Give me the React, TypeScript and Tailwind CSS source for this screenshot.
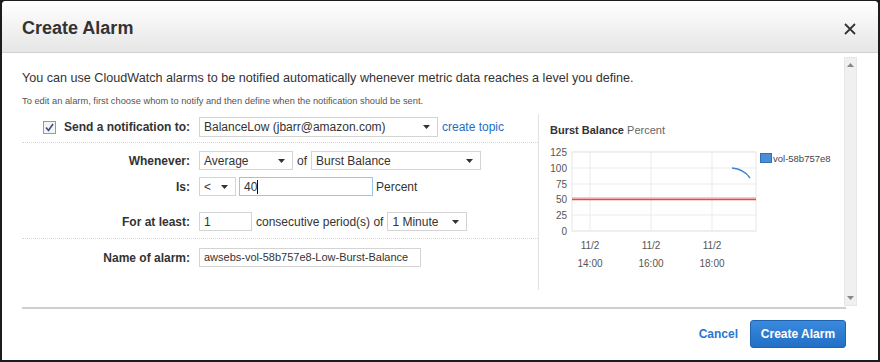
import React from "react";

function Caret() {
  return (
    <svg width="7" height="4" viewBox="0 0 7 4" className="shrink-0">
      <polygon points="0,0 7,0 3.5,4" fill="#333" />
    </svg>
  );
}

function Select({ value, className }: { value: string; className: string }) {
  return (
    <div
      className={
        "h-[19px] flex items-center justify-between pl-[4px] pr-[7px] border border-[#d4d4d4] bg-white text-[12px] text-[#333] leading-none " +
        className
      }
    >
      <span className="whitespace-nowrap">{value}</span>
      <Caret />
    </div>
  );
}

function Field({ value, className, focus = false }: { value: string; className: string; focus?: boolean }) {
  return (
    <div
      className={
        "h-[19px] flex items-center pl-[4px] bg-white text-[#333] leading-none border " +
        (focus ? "border-[#9cc3ec] " : "border-[#d4d4d4] ") +
        className
      }
    >
      <span className="whitespace-nowrap">{value}</span>
      {focus && <span className="w-px h-[14px] bg-[#111]" />}
    </div>
  );
}

function Label({ children }: { children: React.ReactNode }) {
  return (
    <div className="w-[168px] shrink-0 flex justify-end items-center text-[12px] font-bold text-[#333] whitespace-nowrap">
      {children}
    </div>
  );
}

function Chart() {
  const yTicks = [
    { v: "125", y: 12 },
    { v: "100", y: 28 },
    { v: "75", y: 44 },
    { v: "50", y: 59 },
    { v: "25", y: 75 },
    { v: "0", y: 91 },
  ];
  const xTicks = [51, 112, 173];
  const times = ["14:00", "16:00", "18:00"];
  return (
    <svg width="305" height="140" viewBox="0 0 305 140" className="block">
      <rect x="33" y="12" width="184" height="79" fill="#fff" stroke="#e6e6e6" />
      {yTicks.map((t) => (
        <g key={t.v}>
          <line x1="33" x2="217" y1={t.y} y2={t.y} stroke="#ebebeb" />
          <text x="28" y={t.y + 3.5} textAnchor="end" fontSize="10" fill="#555" fontFamily="Liberation Sans, Arial, sans-serif">
            {t.v}
          </text>
        </g>
      ))}
      {xTicks.map((x, i) => (
        <g key={x}>
          <line x1={x} x2={x} y1="12" y2="91" stroke="#ebebeb" />
          <text x={x} y="108.5" textAnchor="middle" fontSize="10" fill="#555" fontFamily="Liberation Sans, Arial, sans-serif">
            11/2
          </text>
          <text x={x} y="126.5" textAnchor="middle" fontSize="10" fill="#555" fontFamily="Liberation Sans, Arial, sans-serif">
            {times[i]}
          </text>
        </g>
      ))}
      <rect x="33" y="57" width="184" height="2" fill="#f6c9c9" />
      <line x1="33" x2="217" y1="59.5" y2="59.5" stroke="#e34a4a" strokeWidth="1.3" />
      <path d="M193 28 Q205 29 211 38" fill="none" stroke="#3f85cc" strokeWidth="1.5" />
      <rect x="221.5" y="13.5" width="11" height="9" fill="#4a8fd6" stroke="#2f70b8" />
      <text x="234" y="21.5" fontSize="9.5" fill="#444" fontFamily="Liberation Sans, Arial, sans-serif">
        vol-58b757e8
      </text>
    </svg>
  );
}

export default function App() {
  return (
    <div className="w-[880px] h-[362px] bg-[#1c1c1c] pt-px px-[2px] pb-[2px] font-['Liberation_Sans',Arial,sans-serif]">
      <div className="w-full h-full bg-white rounded-t-[4px] flex flex-col overflow-hidden">
        {/* header */}
        <div className="h-[52px] shrink-0 flex items-center justify-between pl-[20px] pr-[22px] bg-gradient-to-b from-[#ffffff] to-[#e6e6e6] border-b border-[#d0d0d0]">
          <h1 className="text-[18px] font-bold text-[#333] pt-[4px]">Create Alarm</h1>
          <svg width="12" height="12" viewBox="0 0 12 12" className="mt-[4px]">
            <path d="M1 1 L11 11 M11 1 L1 11" stroke="#333" strokeWidth="1.8" />
          </svg>
        </div>

        {/* body */}
        <div className="flex h-[256px] shrink-0">
          <div className="flex-1 ml-[20px] border-b-2 border-[#cfcfcf] pt-[17px]">
            <p className="text-[12.6px] leading-[16px] text-[#333]">
              You can use CloudWatch alarms to be notified automatically whenever metric data reaches a level you define.
            </p>
            <p className="mt-[9px] text-[9.3px] leading-[12px] text-[#555]">
              To edit an alarm, first choose whom to notify and then define when the notification should be sent.
            </p>

            <div className="mt-[7px] flex">
              {/* form */}
              <div className="w-[516px] shrink-0">
                <div className="h-[29px] flex items-start pt-[3px] gap-[9px] border-b border-dotted border-[#d8d8d8]">
                  <div className="w-[168px] shrink-0 h-[20px] flex justify-end items-center gap-[8px] text-[12px] font-bold text-[#333] whitespace-nowrap">
                    <svg width="13" height="13" viewBox="0 0 13 13">
                      <rect x="0.5" y="0.5" width="12" height="12" fill="#f4f4f4" stroke="#999" />
                      <path d="M3 6.5 L5.5 9.5 L10 3" fill="none" stroke="#3b4f86" strokeWidth="1.6" />
                    </svg>
                    <span>Send a notification to:</span>
                  </div>
                  <Select value="BalanceLow (jbarr@amazon.com)" className="w-[239px] h-[20px]" />
                  <span className="ml-[-5px] h-[20px] flex items-center text-[12px] text-[#1a6fc4] whitespace-nowrap">
                    create topic
                  </span>
                </div>

                <div className="pt-[8px] pb-[7px] border-b border-dotted border-[#d8d8d8] flex flex-col">
                  <div className="flex items-center gap-[9px]">
                    <Label>Whenever:</Label>
                    <Select value="Average" className="w-[94px]" />
                    <span className="text-[12px] text-[#333] -ml-[5px] -mr-[5px]">of</span>
                    <Select value="Burst Balance" className="w-[170px]" />
                  </div>
                  <div className="mt-[7px] flex items-center gap-[9px]">
                    <Label>Is:</Label>
                    <Select value="<" className="w-[37px]" />
                    <Field value="40" focus className="w-[134px] -ml-[6px] text-[12px]" />
                    <span className="text-[12px] text-[#333] -ml-[6px]">Percent</span>
                  </div>
                  <div className="mt-[16px] flex items-center gap-[9px]">
                    <Label>For at least:</Label>
                    <Field value="1" className="w-[53px] text-[12px]" />
                    <span className="text-[12px] text-[#333] -ml-[5px] -mr-[5px] whitespace-nowrap">
                      consecutive period(s) of
                    </span>
                    <Select value="1 Minute" className="w-[80px]" />
                  </div>
                </div>

                <div className="pt-[9px] flex items-center gap-[9px]">
                  <Label>Name of alarm:</Label>
                  <Field value="awsebs-vol-58b757e8-Low-Burst-Balance" className="w-[222px] text-[11px]" />
                </div>
              </div>

              {/* chart */}
              <div className="flex-1 h-[176px] border-l border-[#e2e2e2] pl-[11px] pt-[9px]">
                <div className="text-[11px] leading-[14px] whitespace-nowrap">
                  <span className="font-bold text-[#333]">Burst Balance</span>{" "}
                  <span className="text-[#666]">Percent</span>
                </div>
                <div className="mt-[3px] -ml-[11px]">
                  <Chart />
                </div>
              </div>
            </div>
          </div>

          {/* scrollbar */}
          <div className="w-[13px] mt-[4px] mb-[3px] mr-[21px] -ml-[2px] bg-[#f0f0f0] border border-[#e6e6e6] flex flex-col items-center justify-between py-[5px]">
            <svg width="7" height="4" viewBox="0 0 7 4">
              <polygon points="3.5,0 7,4 0,4" fill="#888" />
            </svg>
            <svg width="7" height="4" viewBox="0 0 7 4">
              <polygon points="0,0 7,0 3.5,4" fill="#888" />
            </svg>
          </div>
        </div>

        {/* footer */}
        <div className="flex-1 flex items-center justify-end gap-[12px] pr-[32px] pb-[1px]">
          <span className="text-[12px] font-bold text-[#2a78cf]">Cancel</span>
          <button className="h-[28px] w-[96px] rounded-[3px] border border-[#1f63b0] bg-gradient-to-b from-[#3a8ade] to-[#226fc6] text-white text-[12px] font-bold">
            Create Alarm
          </button>
        </div>
      </div>
    </div>
  );
}
